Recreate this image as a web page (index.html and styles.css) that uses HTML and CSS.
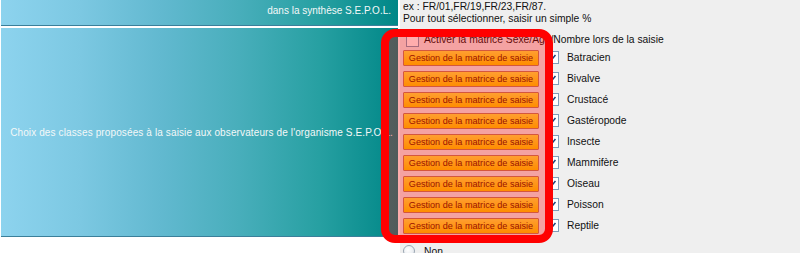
FILE: index.html
```html
<!DOCTYPE html>
<html lang="fr">
<head>
<meta charset="UTF-8">
<title>Paramètres S.E.P.O.L.</title>
<link rel="stylesheet" href="styles.css">
</head>
<body>

<div class="form">
    <div class="row">
        <div class="label label-top">dans la synthèse S.E.P.O.L.</div>
        <div class="field field-top">
            ex : FR/01,FR/19,FR/23,FR/87.<br>
            Pour tout sélectionner, saisir un simple %
        </div>
    </div>

    <div class="row">
        <div class="label label-main">Choix des classes proposées à la saisie aux observateurs de l'organisme S.E.P.O.L.</div>
        <div class="field">
            <div class="activate"><span class="box"></span>Activer la matrice Sexe/Age/Nombre lors de la saisie</div>
            <div class="classe"><button class="btn">Gestion de la matrice de saisie</button><span class="box checked"><svg viewBox="0 0 13 13"><path d="M3 6.5l2.5 2.5 4.5-5.5"/></svg></span><span class="classe-name">Batracien</span></div>
            <div class="classe"><button class="btn">Gestion de la matrice de saisie</button><span class="box checked"><svg viewBox="0 0 13 13"><path d="M3 6.5l2.5 2.5 4.5-5.5"/></svg></span><span class="classe-name">Bivalve</span></div>
            <div class="classe"><button class="btn">Gestion de la matrice de saisie</button><span class="box checked"><svg viewBox="0 0 13 13"><path d="M3 6.5l2.5 2.5 4.5-5.5"/></svg></span><span class="classe-name">Crustacé</span></div>
            <div class="classe"><button class="btn">Gestion de la matrice de saisie</button><span class="box checked"><svg viewBox="0 0 13 13"><path d="M3 6.5l2.5 2.5 4.5-5.5"/></svg></span><span class="classe-name">Gastéropode</span></div>
            <div class="classe"><button class="btn">Gestion de la matrice de saisie</button><span class="box checked"><svg viewBox="0 0 13 13"><path d="M3 6.5l2.5 2.5 4.5-5.5"/></svg></span><span class="classe-name">Insecte</span></div>
            <div class="classe"><button class="btn">Gestion de la matrice de saisie</button><span class="box checked"><svg viewBox="0 0 13 13"><path d="M3 6.5l2.5 2.5 4.5-5.5"/></svg></span><span class="classe-name">Mammifère</span></div>
            <div class="classe"><button class="btn">Gestion de la matrice de saisie</button><span class="box checked"><svg viewBox="0 0 13 13"><path d="M3 6.5l2.5 2.5 4.5-5.5"/></svg></span><span class="classe-name">Oiseau</span></div>
            <div class="classe"><button class="btn">Gestion de la matrice de saisie</button><span class="box checked"><svg viewBox="0 0 13 13"><path d="M3 6.5l2.5 2.5 4.5-5.5"/></svg></span><span class="classe-name">Poisson</span></div>
            <div class="classe"><button class="btn">Gestion de la matrice de saisie</button><span class="box checked"><svg viewBox="0 0 13 13"><path d="M3 6.5l2.5 2.5 4.5-5.5"/></svg></span><span class="classe-name">Reptile</span></div>
        </div>
    </div>

    <div class="row">
        <div class="label split">
            <div class="cell"></div>
            <div class="cell"></div>
        </div>
        <div class="field field-last"><span class="radio"></span>Non</div>
    </div>

    <!-- encadré de mise en évidence -->
    <div class="highlight"></div>
</div>

</body>
</html>
```

FILE: styles.css
```css
body {
    margin: 0;
    padding: 0;
    background-color: #fff;
    font-family: "Liberation Sans", Arial, sans-serif;
    font-size: 10.3px;
    color: #111;
}
.form {
    position: relative;
    background-color: #efefef;
    overflow: hidden;
    height: 253px;
}
.row {
    display: grid;
    grid-template-columns: 400px 1fr;
}
.label {
    display: flex;
    align-items: center;
    justify-content: flex-end;
    padding: 0 7px 0 2px;
    white-space: nowrap;
    font-size: 10px;
    color: #f4f8f8;
    background: linear-gradient(to right, #8dd3ee 0%, #7cc8e2 20%, #62b9d0 40%, #48aebb 60%, #27a0a2 80%, #008787 100%);
    border-left: 1px solid #fff;
    border-right: 2px solid #fff;
    border-bottom: 2px solid #fff;
    box-shadow: inset 0 -1px 0 #3b7f9a;
}
.label-top {
    align-items: flex-end;
    padding-bottom: 10px;
}
.label-main {
    padding-right: 5px;
    letter-spacing: 0.12px;
}
.field {
    padding: 0 0 3px 3px;
}
.field-top {
    padding-top: 1px;
    line-height: 12px;
}
.activate {
    display: flex;
    align-items: center;
    height: 14px;
    margin-top: 5px;
    line-height: 14px;
}
.activate .box {
    margin: 0 5px 0 3px;
}
.classe {
    display: flex;
    align-items: center;
    height: 21px;
}
.btn {
    width: 136px;
    height: 16px;
    padding: 0;
    font-family: "Liberation Sans", Arial, sans-serif;
    font-size: 9.1px;
    color: #6a2200;
    background: linear-gradient(to bottom, #ffea48, #ffd000);
    border: 1px solid #c0805a;
    border-radius: 1px;
    cursor: pointer;
}
.box {
    display: inline-block;
    box-sizing: border-box;
    width: 13px;
    height: 13px;
    background-color: #fff;
    border: 1px solid #7f9db9;
}
.classe .box {
    margin-left: 7px;
}
.box svg {
    display: block;
    width: 11px;
    height: 11px;
    fill: none;
    stroke: #1e3f76;
    stroke-width: 1.8;
}
.classe-name {
    margin-left: 8px;
}
.split {
    display: grid;
    grid-template-columns: 1fr 1fr;
    gap: 4px;
    padding: 0;
    background: #fff;
    box-shadow: none;
    min-height: 20px;
}
.cell {
    background: linear-gradient(to right, #8dd3ee 0%, #7cc8e2 20%, #62b9d0 40%, #48aebb 60%, #27a0a2 80%, #008787 100%);
}
.field-last {
    display: flex;
    align-items: center;
    padding-top: 6px;
    height: 12px;
}
.radio {
    display: inline-block;
    box-sizing: border-box;
    width: 12px;
    height: 12px;
    margin-right: 9px;
    border: 1px solid #9aa6b2;
    border-radius: 50%;
    background: radial-gradient(circle at 40% 40%, #fff, #dde2e8);
}
.highlight {
    position: absolute;
    left: 381px;
    top: 29px;
    width: 156px;
    height: 198px;
    border: 8px solid #ff0000;
    border-radius: 14px;
    background-color: rgba(255, 0, 0, 0.32);
    pointer-events: none;
}
```
